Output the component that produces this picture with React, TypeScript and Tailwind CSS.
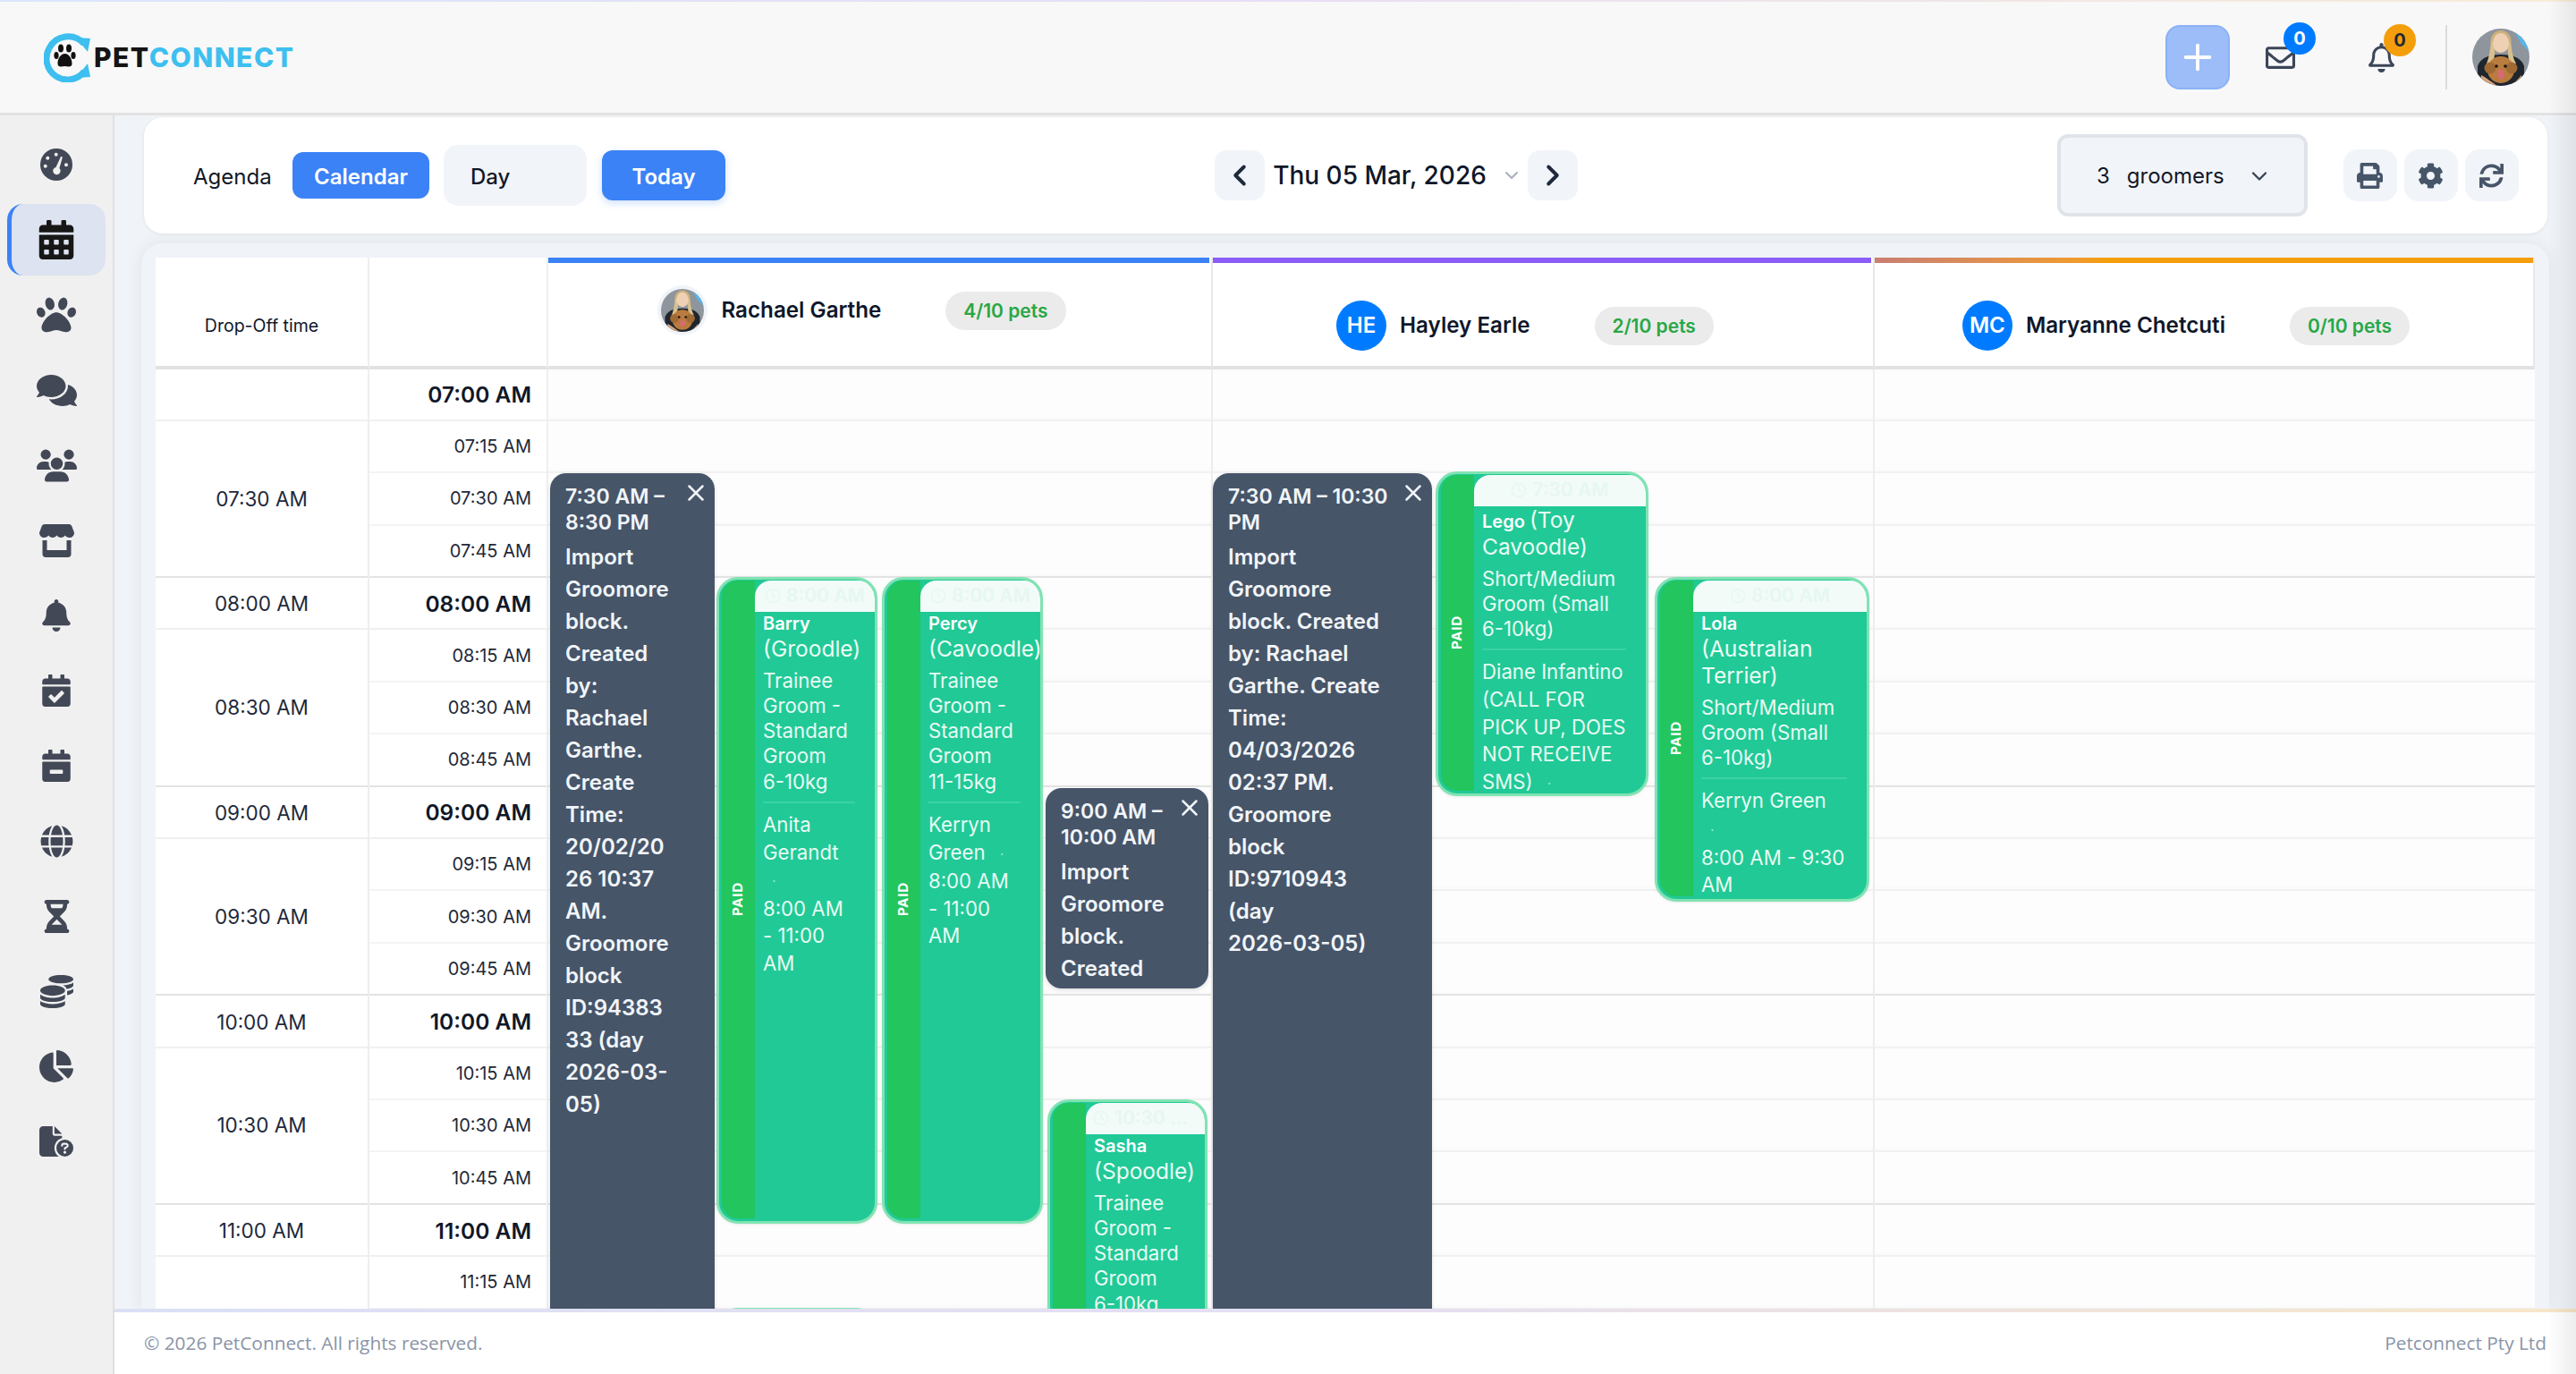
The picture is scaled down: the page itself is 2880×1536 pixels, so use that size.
import { ReactNode } from "react";
import { X, ChevronLeft, ChevronRight, ChevronDown, Plus, Clock } from "lucide-react";
import {
  FaCalendarAlt,
  FaPaw,
  FaComments,
  FaBell,
  FaRegBell,
  FaRegEnvelope,
  FaCalendarCheck,
  FaCalendarMinus,
  FaGlobe,
  FaCoins,
  FaChartPie,
  FaPrint,
  FaCog,
  FaSync,
} from "react-icons/fa";
import { FaUsers, FaHourglassHalf, FaFileCircleQuestion } from "react-icons/fa6";

const GaugeIcon = () => (
  <svg width="36" height="36" viewBox="0 0 36 36">
    <circle cx="18" cy="18" r="18" fill="#424856" />
    <circle cx="8.300" cy="10.700" r="2" fill="#f0f0f0" />
    <circle cx="17.700" cy="6.700" r="2" fill="#f0f0f0" />
    <circle cx="5.700" cy="19.700" r="2" fill="#f0f0f0" />
    <circle cx="29" cy="18.300" r="2" fill="#f0f0f0" />
    <path d="M23 9l2 .6-3.600 12.400a4.200 4.200 0 1 1-3.900-1.100z" fill="#f0f0f0" />
  </svg>
);

const StoreIcon = () => (
  <svg width="39" height="37" viewBox="0 0 39 37" fill="#424856">
    <path d="M6 0h27c1.500 0 2.600.8 3.200 2L39 9.500C39 13 36.500 15 33.500 15c-2.200 0-3.700-1-4.700-2.400-1 1.400-2.700 2.400-4.600 2.400s-3.700-1-4.700-2.400c-1 1.400-2.700 2.400-4.700 2.400s-3.600-1-4.600-2.400c-1 1.400-2.600 2.400-4.700 2.400C2.500 15 0 13 0 9.500L2.800 2C3.400.8 4.500 0 6 0z" />
    <path d="M3.500 18h5v11h22V18h5v15.500c0 2-1.500 3.500-3.500 3.500H7c-2 0-3.500-1.500-3.500-3.500z" />
  </svg>
);

const Avatar = ({ size, id }: { size: string; id: string }) => (
  <svg className={size} viewBox="0 0 64 64">
    <defs>
      <clipPath id={id}>
        <circle cx="32" cy="32" r="32" />
      </clipPath>
    </defs>
    <g clipPath={`url(#${id})`}>
      <rect width="64" height="64" fill="#8e959c" />
      <path d="M46 0h18v26L54 16z" fill="#5ab4e6" />
      <path d="M6 64V42c3-9 12-13 26-13s23 4 26 13v22z" fill="#20262e" />
      <ellipse cx="32" cy="14" rx="11.500" ry="12" fill="#cdb07c" />
      <path d="M21 14c-1 9-2 18-5 25 3 1 6 1 8-1l2-20zM43 14c1 9 2 18 6 25-3 1-6 1-8-1l-2-20z" fill="#d8c08e" />
      <ellipse cx="32" cy="16" rx="9" ry="11" fill="#efd0b4" />
      <circle cx="32" cy="46" r="15" fill="#b97c3e" />
      <circle cx="20" cy="44" r="6.500" fill="#a06a34" />
      <circle cx="44" cy="44" r="6.500" fill="#a06a34" />
      <circle cx="27" cy="42" r="1.800" fill="#1a1210" />
      <circle cx="37" cy="42" r="1.800" fill="#1a1210" />
      <ellipse cx="32" cy="51" rx="3.500" ry="5.500" fill="#d86a77" />
      <path d="M10 52c6 3 12 8 18 12H8zM55 52c-4 5-8 9-13 12h13z" fill="#d9a67f" />
    </g>
  </svg>
);

const Logo = () => (
  <div className="flex items-center">
    <svg width="55" height="55" viewBox="0 0 55 55" className="shrink-0">
      <path d="M45 12A23.500 23.500 0 0 0 6 17M6 17A23.500 23.500 0 0 0 45 43" fill="none" stroke="#3dbfef" strokeWidth="7" />
      <path d="M36 5l16 1-3 15zM36 50l16-1-3-15z" fill="#3dbfef" />
      <ellipse cx="19" cy="17" rx="3" ry="4.500" fill="#111" />
      <ellipse cx="28" cy="17" rx="3" ry="4.500" fill="#111" />
      <ellipse cx="14" cy="25" rx="2.600" ry="4" fill="#111" />
      <ellipse cx="33" cy="25" rx="2.600" ry="4" fill="#111" />
      <path d="M23.500 23c5 0 8 6 8 11 0 5-5 3-8 3s-8 2-8-3c0-5 3-11 8-11z" fill="#111" />
    </svg>
    <span className="ml-[1px] text-[30px] leading-none font-extrabold tracking-[1.5px] text-[#141414]">
      PET<span className="text-[#3dbfef]">CONNECT</span>
    </span>
  </div>
);

const TopBar = () => (
  <header className="relative h-[129px] shrink-0 border-b-[3px] border-[#e2e2e2] bg-[#f8f8f8]">
    <div className="h-[2px] bg-linear-to-r from-[#dbe6fc] via-[#e8dff5] to-[#f8ecd8]" />
    <div className="flex h-[124px] items-center justify-between pr-[52px] pl-[49px]">
      <Logo />
      <div className="flex h-[72px] items-center">
        <button className="flex h-[72px] w-[72px] items-center justify-center rounded-[16px] border-2 border-[#8ab2f7] bg-[#9cbdf8] text-white">
          <Plus size={46} strokeWidth={2} />
        </button>
        <div className="relative ml-[40px] text-[#3b4658]">
          <FaRegEnvelope size={33} />
          <span className="absolute -top-[23px] left-[20px] flex h-[36px] w-[36px] items-center justify-center rounded-full bg-[#007bff] text-[20px] font-bold text-white">0</span>
        </div>
        <div className="relative ml-[80px] text-[#3b4658]">
          <FaRegBell size={33} />
          <span className="absolute -top-[21px] left-[19px] flex h-[36px] w-[36px] items-center justify-center rounded-full bg-[#f59e0b] text-[20px] font-bold text-[#1f2937]">0</span>
        </div>
        <div className="ml-[55px] h-[72px] w-[2px] bg-[#dcdcdc]" />
        <div className="ml-[28px]">
          <Avatar id="av-top" size="h-[64px] w-[64px]" />
        </div>
      </div>
    </div>
  </header>
);

const SideItem = ({ children, active }: { children: ReactNode; active?: boolean }) => (
  <div
    className={
      active
        ? "mb-[4px] flex h-[80px] w-[110px] items-center justify-center rounded-[18px] border-l-[5px] border-[#3b82f6] bg-[#dde3f0] pr-[5px] text-[#171717]"
        : "mb-[4px] flex h-[80px] w-[110px] items-center justify-center text-[#424856]"
    }
  >
    {children}
  </div>
);

const Sidebar = () => (
  <aside className="flex w-[128px] shrink-0 flex-col items-center border-r-2 border-[#e0e0e0] bg-[#f0f0f0] pt-[15px]">
    <SideItem><GaugeIcon /></SideItem>
    <SideItem active><FaCalendarAlt size={44} /></SideItem>
    <SideItem><FaPaw size={44} /></SideItem>
    <SideItem><FaComments size={45} /></SideItem>
    <SideItem><FaUsers size={45} /></SideItem>
    <SideItem><StoreIcon /></SideItem>
    <SideItem><FaBell size={36} /></SideItem>
    <SideItem><FaCalendarCheck size={36} /></SideItem>
    <SideItem><FaCalendarMinus size={36} /></SideItem>
    <SideItem><FaGlobe size={37} /></SideItem>
    <SideItem><FaHourglassHalf size={37} /></SideItem>
    <SideItem><FaCoins size={37} /></SideItem>
    <SideItem><FaChartPie size={38} /></SideItem>
    <SideItem><FaFileCircleQuestion size={38} /></SideItem>
  </aside>
);

const IconButton = ({ children }: { children: ReactNode }) => (
  <button className="flex h-[58px] w-[60px] items-center justify-center rounded-[16px] bg-[#f1f4f9] text-[#475569]">
    {children}
  </button>
);

const Toolbar = () => (
  <section className="flex h-[132px] shrink-0 items-center justify-between rounded-[22px] border border-[#ececec] bg-white pr-[32px] pl-[55px] shadow-[0_1px_3px_rgba(0,0,0,0.05)]">
    <div className="flex items-center text-[24px]">
      <span className="w-[87px] pt-[3px] font-normal text-[#111827]">Agenda</span>
      <button className="ml-[24px] h-[52px] w-[153px] rounded-[12px] bg-[#3b82f6] pt-[3px] font-semibold text-white">Calendar</button>
      <button className="ml-[16px] h-[68px] w-[160px] rounded-[16px] bg-[#f1f4f9] pt-[3px] pl-[30px] text-left font-medium text-[#111827]">Day</button>
      <button className="ml-[17px] h-[56px] w-[138px] rounded-[12px] bg-[#3b82f6] pt-[3px] font-semibold text-white shadow-[0_3px_8px_rgba(59,130,246,0.25)]">Today</button>
    </div>
    <div className="ml-[11px] flex items-center">
      <button className="flex h-[56px] w-[56px] items-center justify-center rounded-[14px] bg-[#f1f4f9] text-[#1e293b]">
        <ChevronLeft size={38} strokeWidth={2.500} />
      </button>
      <span className="ml-[9px] text-[28px] font-medium whitespace-nowrap text-[#0f172a]">Thu 05 Mar, 2026</span>
      <ChevronDown className="ml-[16px] text-[#a8b0bd]" size={24} />
      <button className="ml-[6px] flex h-[56px] w-[56px] items-center justify-center rounded-[14px] bg-[#f1f4f9] text-[#1e293b]">
        <ChevronRight size={38} strokeWidth={2.500} />
      </button>
    </div>
    <div className="flex items-center">
      <button className="flex h-[92px] w-[280px] items-center rounded-[12px] border-4 border-[#e0e4ea] bg-[#f1f4f9] pt-[2px] pl-[40px] text-[24px] text-[#111827]">
        <span>3</span>
        <span className="ml-[19px]">groomers</span>
        <ChevronDown className="ml-[25px] text-[#374151]" size={28} />
      </button>
      <div className="ml-[40px] flex gap-[8px]">
        <IconButton><FaPrint size={29} /></IconButton>
        <IconButton><FaCog size={29} /></IconButton>
        <IconButton><FaSync size={27} /></IconButton>
      </div>
    </div>
  </section>
);

const GroomerHead = ({
  bar,
  avatar,
  name,
  pets,
  pad,
}: {
  bar: string;
  avatar: ReactNode;
  name: string;
  pets: string;
  pad: string;
}) => (
  <div className="relative flex flex-col border-r-2 border-b-4 border-[#e8e8e8] border-b-[#e2e2e2]">
    <div className={`h-[6px] ${bar}`} />
    <div className={`flex flex-1 items-center justify-center pr-[40px] ${pad}`}>
      {avatar}
      <span className="ml-[15px] text-[24.2px] font-semibold whitespace-nowrap text-[#0f172a]">{name}</span>
      <span className="ml-[72px] flex h-[43px] items-center rounded-full bg-[#ebebeb] px-[20px] text-[21px] font-semibold whitespace-nowrap text-[#28a745]">{pets}</span>
    </div>
  </div>
);

const Initials = ({ text }: { text: string }) => (
  <span className="flex h-[56px] w-[56px] items-center justify-center rounded-full bg-[#007bff] text-[24px] font-semibold text-white">{text}</span>
);

const rows = [
  "07:00", "07:15", "07:30", "07:45",
  "08:00", "08:15", "08:30", "08:45",
  "09:00", "09:15", "09:30", "09:45",
  "10:00", "10:15", "10:30", "10:45",
  "11:00", "11:15",
];

const DropOffColumn = () => (
  <div className="border-r-2 border-[#eeeeee]">
    {rows.filter((r) => r.endsWith(":00") || r.endsWith(":30")).map((r) =>
      r.endsWith(":30") ? (
        <div key={r} className="flex h-[175.2px] items-center justify-center border-b-2 border-[#e3e3e3] text-[22.5px] text-[#1e293b]">{r} AM</div>
      ) : (
        <div key={r} className="flex h-[58.4px] items-center justify-center border-b-2 border-[#f0f0f0] pt-[2px] text-[22.5px] text-[#1e293b]">{r === "07:00" ? "" : `${r} AM`}</div>
      )
    )}
  </div>
);

const TimeColumn = () => (
  <div className="border-r-2 border-[#eeeeee]">
    {rows.map((r, i) =>
      r.endsWith(":00") ? (
        <div key={r} className="flex h-[58.4px] items-center justify-end border-b-2 border-[#f0f0f0] pt-[2px] pr-[17px] text-[24.5px] font-semibold text-[#111827]">{r} AM</div>
      ) : (
        <div key={r} className={i % 4 === 3 ? "flex h-[58.4px] items-center justify-end border-b-2 border-[#e3e3e3] pr-[17px] text-[20px] text-[#1f2937]" : "flex h-[58.4px] items-center justify-end border-b-2 border-[#f4f4f4] pr-[17px] text-[20px] text-[#1f2937]"}>{r} AM</div>
      )
    )}
  </div>
);

const BlockEvent = ({ place, time, body }: { place: string; time: string; body: string }) => (
  <div className={`absolute z-10 overflow-hidden rounded-[18px] bg-[#475569] pt-[12px] pr-[46px] pl-[17px] text-[24px] font-semibold text-[#f1f5f9] shadow-[0_2px_4px_rgba(0,0,0,0.12)] ${place}`}>
    <X className="absolute top-[7px] right-[6px]" size={30} strokeWidth={2} />
    <p className="text-[23px] leading-[29px]">{time}</p>
    <p className="mt-[6px] leading-[36px] wrap-anywhere">{body}</p>
  </div>
);

const GreenEvent = ({
  place,
  start,
  pet,
  breed,
  service,
  owner,
  time,
}: {
  place: string;
  start: string;
  pet: string;
  breed: string;
  service: string;
  owner?: string;
  time?: string;
}) => (
  <div className={`absolute z-10 flex overflow-hidden rounded-[24px] border-[3px] border-[#80e3b2] bg-[#21c997] pt-[1px] pb-[3px] pl-[3px] shadow-[0_1px_3px_rgba(0,0,0,0.08)] ${place}`}>
    <div className="flex w-[37px] shrink-0 items-center justify-center rounded-l-[18px] bg-[#22c55e]">
      <span className="rotate-180 text-[15px] font-bold tracking-[0.8px] text-white [writing-mode:vertical-rl]">PAID</span>
    </div>
    <div className="min-w-0 flex-1">
      <div className="flex h-[35px] items-center justify-center gap-[6px] rounded-t-[18px] bg-[#f2fbf8] px-[8px] text-[21px] font-semibold text-[#e6f7f1]">
        <Clock className="shrink-0" size={18} />
        <span className="truncate">{start}</span>
      </div>
      <div className="pr-[22px] pl-[9px] text-white">
        <p className="text-[20px] leading-[26px] font-semibold text-white">
          {pet} <span className="text-[24.5px] leading-[30px] font-normal text-[#ecfdf5]">{breed}</span>
        </p>
        <p className="mt-[7px] text-[22.2px] leading-[28.3px] font-normal text-[#e8fbf3]">{service}</p>
        {owner && (
          <>
            <div className="mt-[8px] h-[2px] bg-[#3ad3a4]" />
            <p className="mt-[9px] text-[22.2px] leading-[30.6px] font-normal text-[#e8fbf3]">
              {owner} <span className="mx-[10px] text-[16px] text-[#8fe8c8]">·</span>{" "}
              {time && <span className="inline-block">{time}</span>}
            </p>
          </>
        )}
      </div>
    </div>
  </div>
);

const GroomerColumn = ({ children, edge }: { children?: ReactNode; edge?: boolean }) => (
  <div className={edge ? "relative bg-[#fdfdfe]" : "relative border-r-2 border-[#ededed] bg-[#fdfdfe]"}>
    {rows.map((r, i) => (
      <div
        key={r}
        className={
          i % 4 === 3
            ? "h-[58.4px] border-b-2 border-[#e3e3e3] shadow-[inset_0_-6px_6px_-6px_rgba(0,0,0,0.03)]"
            : "h-[58.4px] border-b-2 border-[#f1f1f1] shadow-[inset_0_-6px_6px_-6px_rgba(0,0,0,0.03)]"
        }
      />
    ))}
    {children}
  </div>
);

const Schedule = () => (
  <section className="mt-[10px] -mr-[1px] -ml-[2px] flex-1 rounded-t-[24px] bg-[#f0f3f8] pt-[16px] pr-[16px] pl-[16px] shadow-[0_0_18px_rgba(0,0,0,0.07)]">
    <div className="grid grid-cols-[239px_200px_743px_740px_738px] grid-rows-[124.5px_auto] bg-white">
      <div className="flex items-center justify-center border-r-2 border-b-4 border-[#eeeeee] border-b-[#e2e2e2] pt-[32px] text-[19.5px] text-[#0f172a]">Drop-Off time</div>
      <div className="border-r-2 border-b-4 border-[#eeeeee] border-b-[#e2e2e2]" />
      <GroomerHead
        bar="mr-[2px] bg-[#3b82f6]"
        pad="pb-[8px]"
        avatar={
          <span className="rounded-full bg-[#f0f4f9] p-[4px]">
            <Avatar id="av-head" size="block h-[48px] w-[48px]" />
          </span>
        }
        name="Rachael Garthe"
        pets="4/10 pets"
      />
      <GroomerHead bar="mr-[2px] bg-[#8b5cf6]" pad="pt-[26px]" avatar={<Initials text="HE" />} name="Hayley Earle" pets="2/10 pets" />
      <GroomerHead bar="bg-linear-to-r from-[#c97f70] to-[#f59e0b] to-[35%]" pad="pt-[26px]" avatar={<Initials text="MC" />} name="Maryanne Chetcuti" pets="0/10 pets" />

      <DropOffColumn />
      <TimeColumn />
      <GroomerColumn>
        <BlockEvent
          place="top-[116px] left-[2px] h-[1100px] w-[184px]"
          time="7:30 AM – 8:30 PM"
          body="Import Groomore block. Created by: Rachael Garthe. Create Time: 20/02/2026 10:37 AM. Groomore block ID:9438333 (day 2026-03-05)"
        />
        <GreenEvent
          place="top-[232px] left-[188px] h-[723px] w-[180px]"
          start="8:00 AM"
          pet="Barry"
          breed="(Groodle)"
          service={"Trainee Groom - Standard Groom 6-\u206010kg"}
          owner="Anita Gerandt"
          time="8:00 AM - 11:00 AM"
        />
        <GreenEvent
          place="top-[232px] left-[373px] h-[723px] w-[180px]"
          start="8:00 AM"
          pet="Percy"
          breed="(Cavoodle)"
          service={"Trainee Groom - Standard Groom 11-\u206015kg"}
          owner="Kerryn Green"
          time="8:00 AM - 11:00 AM"
        />
        <BlockEvent
          place="top-[468px] left-[556px] h-[224px] w-[182px]"
          time="9:00 AM – 10:00 AM"
          body="Import Groomore block. Created"
        />
        <GreenEvent
          place="top-[816px] left-[558px] h-[700px] w-[179px]"
          start="10:30 AM - 12:30 PM"
          pet="Sasha"
          breed="(Spoodle)"
          service={"Trainee Groom - Standard Groom 6-\u206010kg"}
        />
        <div className="absolute top-[1049px] left-[188px] z-10 h-[200px] w-[180px] rounded-[24px] border-[3px] border-[#80e3b2] bg-[#21c997]" />
      </GroomerColumn>
      <GroomerColumn>
        <BlockEvent
          place="top-[116px] left-[0px] h-[1000px] w-[245px]"
          time="7:30 AM – 10:30 PM"
          body={"Import Groomore block. Created by: Rachael Garthe. Create Time: 04/03/2026 02:37 PM. Groomore block ID:9710943 (day 2026-\u206003-\u206005)"}
        />
        <GreenEvent
          place="top-[114px] left-[249px] h-[363px] w-[238px]"
          start="7:30 AM"
          pet="Lego"
          breed="(Toy Cavoodle)"
          service={"Short/Medium Groom (Small 6-\u206010kg)"}
          owner="Diane Infantino (CALL FOR PICK UP, DOES NOT RECEIVE SMS)"
        />
        <GreenEvent
          place="top-[232px] left-[494px] h-[363px] w-[240px]"
          start="8:00 AM"
          pet="Lola"
          breed="(Australian Terrier)"
          service={"Short/Medium Groom (Small 6-\u206010kg)"}
          owner="Kerryn Green"
          time="8:00 AM - 9:30 AM"
        />
      </GroomerColumn>
      <GroomerColumn edge />
    </div>
  </section>
);

const Footer = () => (
  <footer className="shrink-0 bg-white font-['Open_Sans',sans-serif]">
    <div className="h-[4px] bg-linear-to-r from-[#dbe0f5] via-[#e5dff3] to-[#f8e6c8]" />
    <div className="flex h-[69px] items-center justify-between pr-[33px] pl-[33px] text-[20.8px] text-[#8a94a6]">
      <span>© 2026 PetConnect. All rights reserved.</span>
      <span>Petconnect Pty Ltd</span>
    </div>
  </footer>
);

export default function App() {
  return (
    <div className="relative flex h-screen w-full flex-col overflow-hidden bg-[#f0f4f9] font-['Inter',sans-serif]">
      <TopBar />
      <div className="flex min-h-0 flex-1">
        <Sidebar />
        <div className="flex min-w-0 flex-1 flex-col">
          <main className="flex min-h-0 flex-1 flex-col overflow-hidden pt-[1px] pr-[31px] pl-[32px]">
            <Toolbar />
            <Schedule />
          </main>
          <Footer />
        </div>
      </div>
      <div className="pointer-events-none absolute inset-y-0 right-0 z-20 w-[32px] bg-linear-to-r from-transparent to-[rgba(0,0,0,0.07)]" />
    </div>
  );
}
